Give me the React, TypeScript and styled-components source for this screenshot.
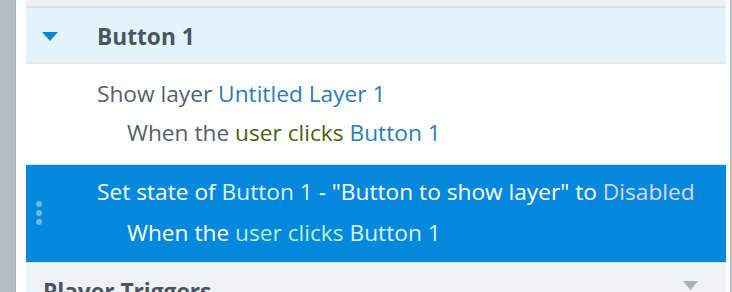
import React from "react";
import styled, { createGlobalStyle } from "styled-components";

const Global = createGlobalStyle`
  html, body { margin: 0; padding: 0; background: #ffffff; }
  body { font-family: "Open Sans", "Noto Sans", sans-serif; overflow: hidden; }
`;

const Page = styled.div`
  display: flex;
  width: 732px;
  height: 292px;
  overflow: hidden;
`;

const LeftBar = styled.div`
  width: 15px;
  background: #b4bcc3;
  border-right: 1px solid #a9b2b9;
  flex-shrink: 0;
`;

const Gutter = styled.div<{ $w: number }>`
  width: ${(p) => p.$w}px;
  background: #ffffff;
  flex-shrink: 0;
`;

const RightLine = styled.div`
  width: 2px;
  background: #b8bfc5;
  flex-shrink: 0;
`;

const Panel = styled.div`
  flex: 1;
  min-width: 0;
  display: flex;
  flex-direction: column;
`;

const TopStrip = styled.div`
  height: 6px;
  flex-shrink: 0;
  background: #eef2f5;
`;

const GroupHeader = styled.div`
  height: 54px;
  flex-shrink: 0;
  background: #e3f4fc;
  border-top: 2px solid #dde3e7;
  border-bottom: 2px solid #e6eaec;
  display: flex;
  align-items: center;
`;

const Caret = styled.svg`
  width: 16px;
  height: 9px;
  margin-left: 16px;
  margin-right: 39px;
  margin-top: 2px;
  flex-shrink: 0;
`;

const HeaderTitle = styled.span`
  font-weight: 700;
  font-size: 22.7px;
  line-height: 30px;
  color: #4b5562;
  margin-top: 4px;
`;

const Row = styled.div<{ $selected?: boolean }>`
  position: relative;
  flex-shrink: 0;
  height: ${(p) => (p.$selected ? 97 : 100)}px;
  background: ${(p) => (p.$selected ? "#0288dc" : "#ffffff")};
  border-top: ${(p) => (p.$selected ? "1px solid #d8e4ec" : "none")};
  padding-left: 71px;
  display: flex;
  flex-direction: column;
`;

const Line = styled.div<{ $indent?: boolean; $selected?: boolean; $top: number }>`
  font-size: 22.7px;
  line-height: 30px;
  margin-top: ${(p) => p.$top}px;
  padding-left: ${(p) => (p.$indent ? 30 : 0)}px;
  color: ${(p) => (p.$selected ? "#ffffff" : "#55606b")};
  white-space: nowrap;
`;

const Tok = styled.span<{ $kind: "obj" | "event" | "state"; $selected?: boolean }>`
  color: ${(p) =>
    p.$selected
      ? p.$kind === "event"
        ? "#b8f3cf"
        : p.$kind === "state"
        ? "#ddd8ff"
        : "#dff3ff"
      : p.$kind === "event"
      ? "#4f5e14"
      : p.$kind === "state"
      ? "#6a5bc0"
      : "#2a7cb8"};
`;

const Grip = styled.div`
  position: absolute;
  left: 10px;
  top: 36px;
  display: flex;
  flex-direction: column;
  gap: 3px;
`;

const Dot = styled.span`
  width: 6px;
  height: 6px;
  border-radius: 50%;
  background: #6cb9ee;
`;

const Section = styled.div`
  flex: 1;
  background: #eef2f5;
  border-top: 1px solid #dfe5ea;
  display: flex;
  align-items: flex-start;
  justify-content: space-between;
  padding: 14px 28px 0 17px;
`;

const SectionTitle = styled.span`
  font-weight: 700;
  font-size: 22.7px;
  line-height: 30px;
  color: #4b5562;
`;

const SectionCaret = styled.svg`
  width: 15px;
  height: 9px;
  margin-top: 4px;
`;

export default function App() {
  return (
    <>
      <Global />
      <Page>
        <LeftBar />
        <Gutter $w={10} />
        <Panel>
          <TopStrip />
          <GroupHeader>
            <Caret viewBox="0 0 16 9">
              <path d="M0 0 H16 L8 9 Z" fill="#0a84d6" />
            </Caret>
            <HeaderTitle>Button 1</HeaderTitle>
          </GroupHeader>
          <Row>
            <Line $top={15}>
              Show layer <Tok $kind="obj">Untitled Layer 1</Tok>
            </Line>
            <Line $indent $top={9}>
              When the <Tok $kind="event">user clicks</Tok> <Tok $kind="obj">Button 1</Tok>
            </Line>
          </Row>
          <Row $selected>
            <Grip>
              <Dot />
              <Dot />
              <Dot />
            </Grip>
            <Line $selected $top={12}>
              Set state of <Tok $selected $kind="obj">Button 1</Tok> - "Button to show layer" to{" "}
              <Tok $selected $kind="state">Disabled</Tok>
            </Line>
            <Line $selected $indent $top={11}>
              When the <Tok $selected $kind="event">user clicks</Tok>{" "}
              <Tok $selected $kind="obj">Button 1</Tok>
            </Line>
          </Row>
          <Section>
            <SectionTitle>Player Triggers</SectionTitle>
            <SectionCaret viewBox="0 0 15 9">
              <path d="M0 0 H15 L7.5 9 Z" fill="#a9b1b8" />
            </SectionCaret>
          </Section>
        </Panel>
        <Gutter $w={4} />
        <RightLine />
      </Page>
    </>
  );
}
